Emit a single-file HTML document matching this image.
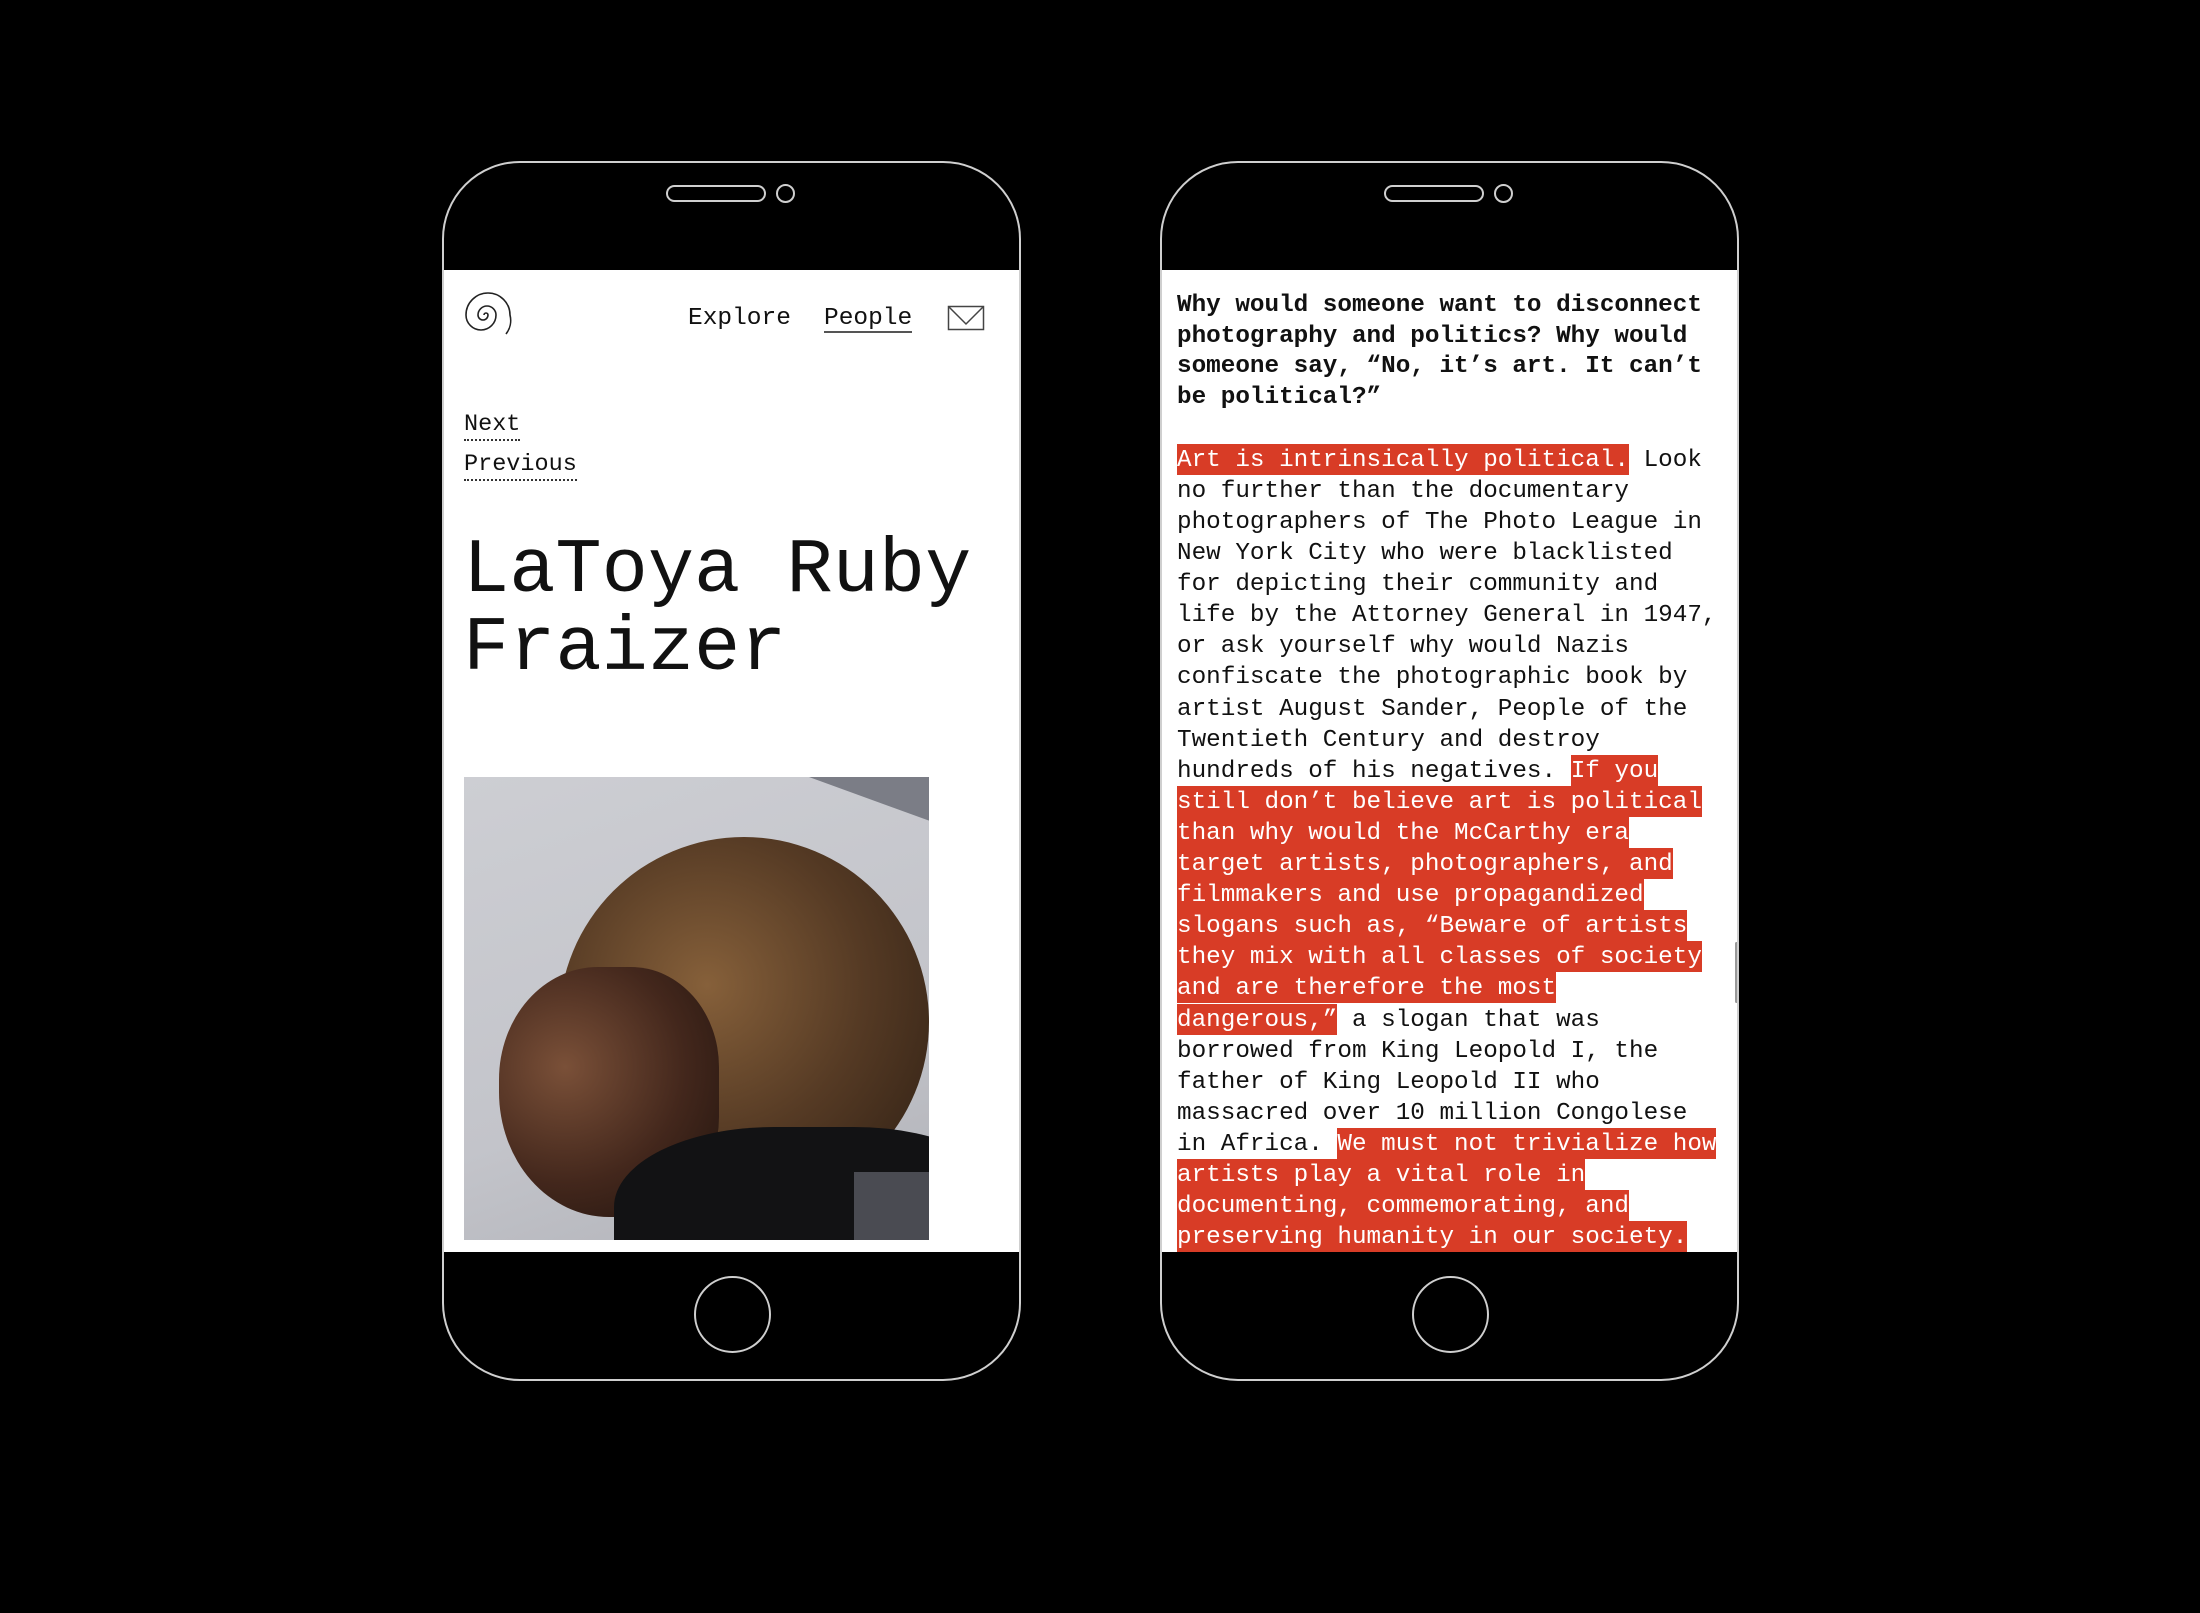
<!DOCTYPE html>
<html><head><meta charset="utf-8"><style>
*{margin:0;padding:0;box-sizing:border-box}
html,body{width:2200px;height:1613px;background:#000;overflow:hidden}
body{position:relative;font-family:"Liberation Mono",monospace;color:#111}
.phone{position:absolute;top:161px;width:579px;height:1220px;border:2px solid #cfcfcf;border-radius:78px;background:#000;overflow:hidden}
.screen{position:absolute;left:0;right:0;top:107px;height:982px;background:#fff;overflow:hidden}
.speaker{position:absolute;left:222px;top:22px;width:100px;height:17px;border:2px solid #cfcfcf;border-radius:9px}
.cam{position:absolute;left:332px;top:21px;width:19px;height:19px;border:2px solid #cfcfcf;border-radius:50%}
.home{position:absolute;left:250px;top:1113px;width:77px;height:77px;border:2px solid #cfcfcf;border-radius:50%}
.a{position:absolute;white-space:pre}
.nav{font-size:24.5px;line-height:30px}
.nx{font-size:23.5px;line-height:28px;border-bottom:2px dotted #333}
.title{font-size:77px;line-height:78px}
.txt{position:absolute;left:15px;top:20px;font-size:24.3px;width:560px}
.b{font-weight:bold;line-height:30.7px;white-space:pre}
.body{line-height:31.1px;white-space:pre;margin-top:31px}
.r{background:#d83c26;color:#fff;padding:3px 0 1px}
</style></head><body>

<div class="phone" style="left:442px">
  <div class="speaker"></div><div class="cam"></div>
  <div class="screen">
    <svg style="position:absolute;left:0;top:0" width="578" height="982" viewBox="442 268 578 982">
      <path d="M482,313 A2,2 0 0 1 486,313 A5,5 0 0 1 476,313 A9,9 0 0 1 494,313 A15,15 0 0 1 464,313 A22,22 0 0 1 508,313 A22,22 0 0 1 504,332" fill="none" stroke="#222" stroke-width="1.6"/>
      <rect x="946.5" y="304.5" width="35" height="23" fill="none" stroke="#444" stroke-width="1.5"/>
      <path d="M947,305 L964,322 L981,305" fill="none" stroke="#444" stroke-width="1.5"/>
    </svg>
    <div class="a nav" style="left:244px;top:34px">Explore</div>
    <div class="a nav" style="left:380px;top:34px">People</div>
    <div style="position:absolute;left:380px;top:61px;width:88px;height:2px;background:#555"></div>
    <div class="a nx" style="left:20px;top:141px">Next</div>
    <div class="a nx" style="left:20px;top:181px">Previous</div>
    <div class="a title" style="left:19px;top:263px">LaToya Ruby
Fraizer</div>
    <div style="position:absolute;left:20px;top:507px;width:465px;height:463px;overflow:hidden;background:linear-gradient(160deg,#cdced3 0%,#c3c4ca 60%,#b0b1b7 100%)">
      <div style="position:absolute;left:150px;top:-150px;width:700px;height:200px;background:#6d7079;transform:rotate(20deg);opacity:.85"></div>
      <div style="position:absolute;left:95px;top:60px;width:370px;height:370px;border-radius:50%;background:radial-gradient(ellipse at 40% 40%,#86603a 0%,#553a24 50%,#2a1c12 100%)"></div>
      <div style="position:absolute;left:35px;top:190px;width:220px;height:250px;border-radius:45% 40% 40% 50%;background:radial-gradient(ellipse at 30% 40%,#7a5038 0%,#43271c 55%,#1e120d 100%)"></div>
      <div style="position:absolute;left:150px;top:350px;width:400px;height:200px;border-radius:40% 40% 0 0;background:#121214"></div>
      <div style="position:absolute;left:390px;top:395px;width:80px;height:80px;background:#4a4b52"></div>
    </div>
  </div>
  <div class="home"></div>
</div>

<div class="phone" style="left:1160px">
  <div class="speaker"></div><div class="cam"></div>
  <div class="screen">
    <div class="txt" style="top:21px">
<div class="b">Why would someone want to disconnect
photography and politics? Why would
someone say, “No, it’s art. It can’t
be political?”</div>
<div class="body"><span class="r">Art is intrinsically political.</span> Look
no further than the documentary
photographers of The Photo League in
New York City who were blacklisted
for depicting their community and
life by the Attorney General in 1947,
or ask yourself why would Nazis
confiscate the photographic book by
artist August Sander, People of the
Twentieth Century and destroy
hundreds of his negatives. <span class="r">If you</span>
<span class="r">still don’t believe art is political</span>
<span class="r">than why would the McCarthy era</span>
<span class="r">target artists, photographers, and</span>
<span class="r">filmmakers and use propagandized</span>
<span class="r">slogans such as, “Beware of artists</span>
<span class="r">they mix with all classes of society</span>
<span class="r">and are therefore the most</span>
<span class="r">dangerous,”</span> a slogan that was
borrowed from King Leopold I, the
father of King Leopold II who
massacred over 10 million Congolese
in Africa. <span class="r">We must not trivialize how</span>
<span class="r">artists play a vital role in</span>
<span class="r">documenting, commemorating, and</span>
<span class="r">preserving humanity in our society.</span></div>
    </div>
    <div style="position:absolute;left:573px;top:672px;width:3px;height:61px;background:#999;border-radius:2px"></div>
  </div>
  <div class="home"></div>
</div>

</body></html>
